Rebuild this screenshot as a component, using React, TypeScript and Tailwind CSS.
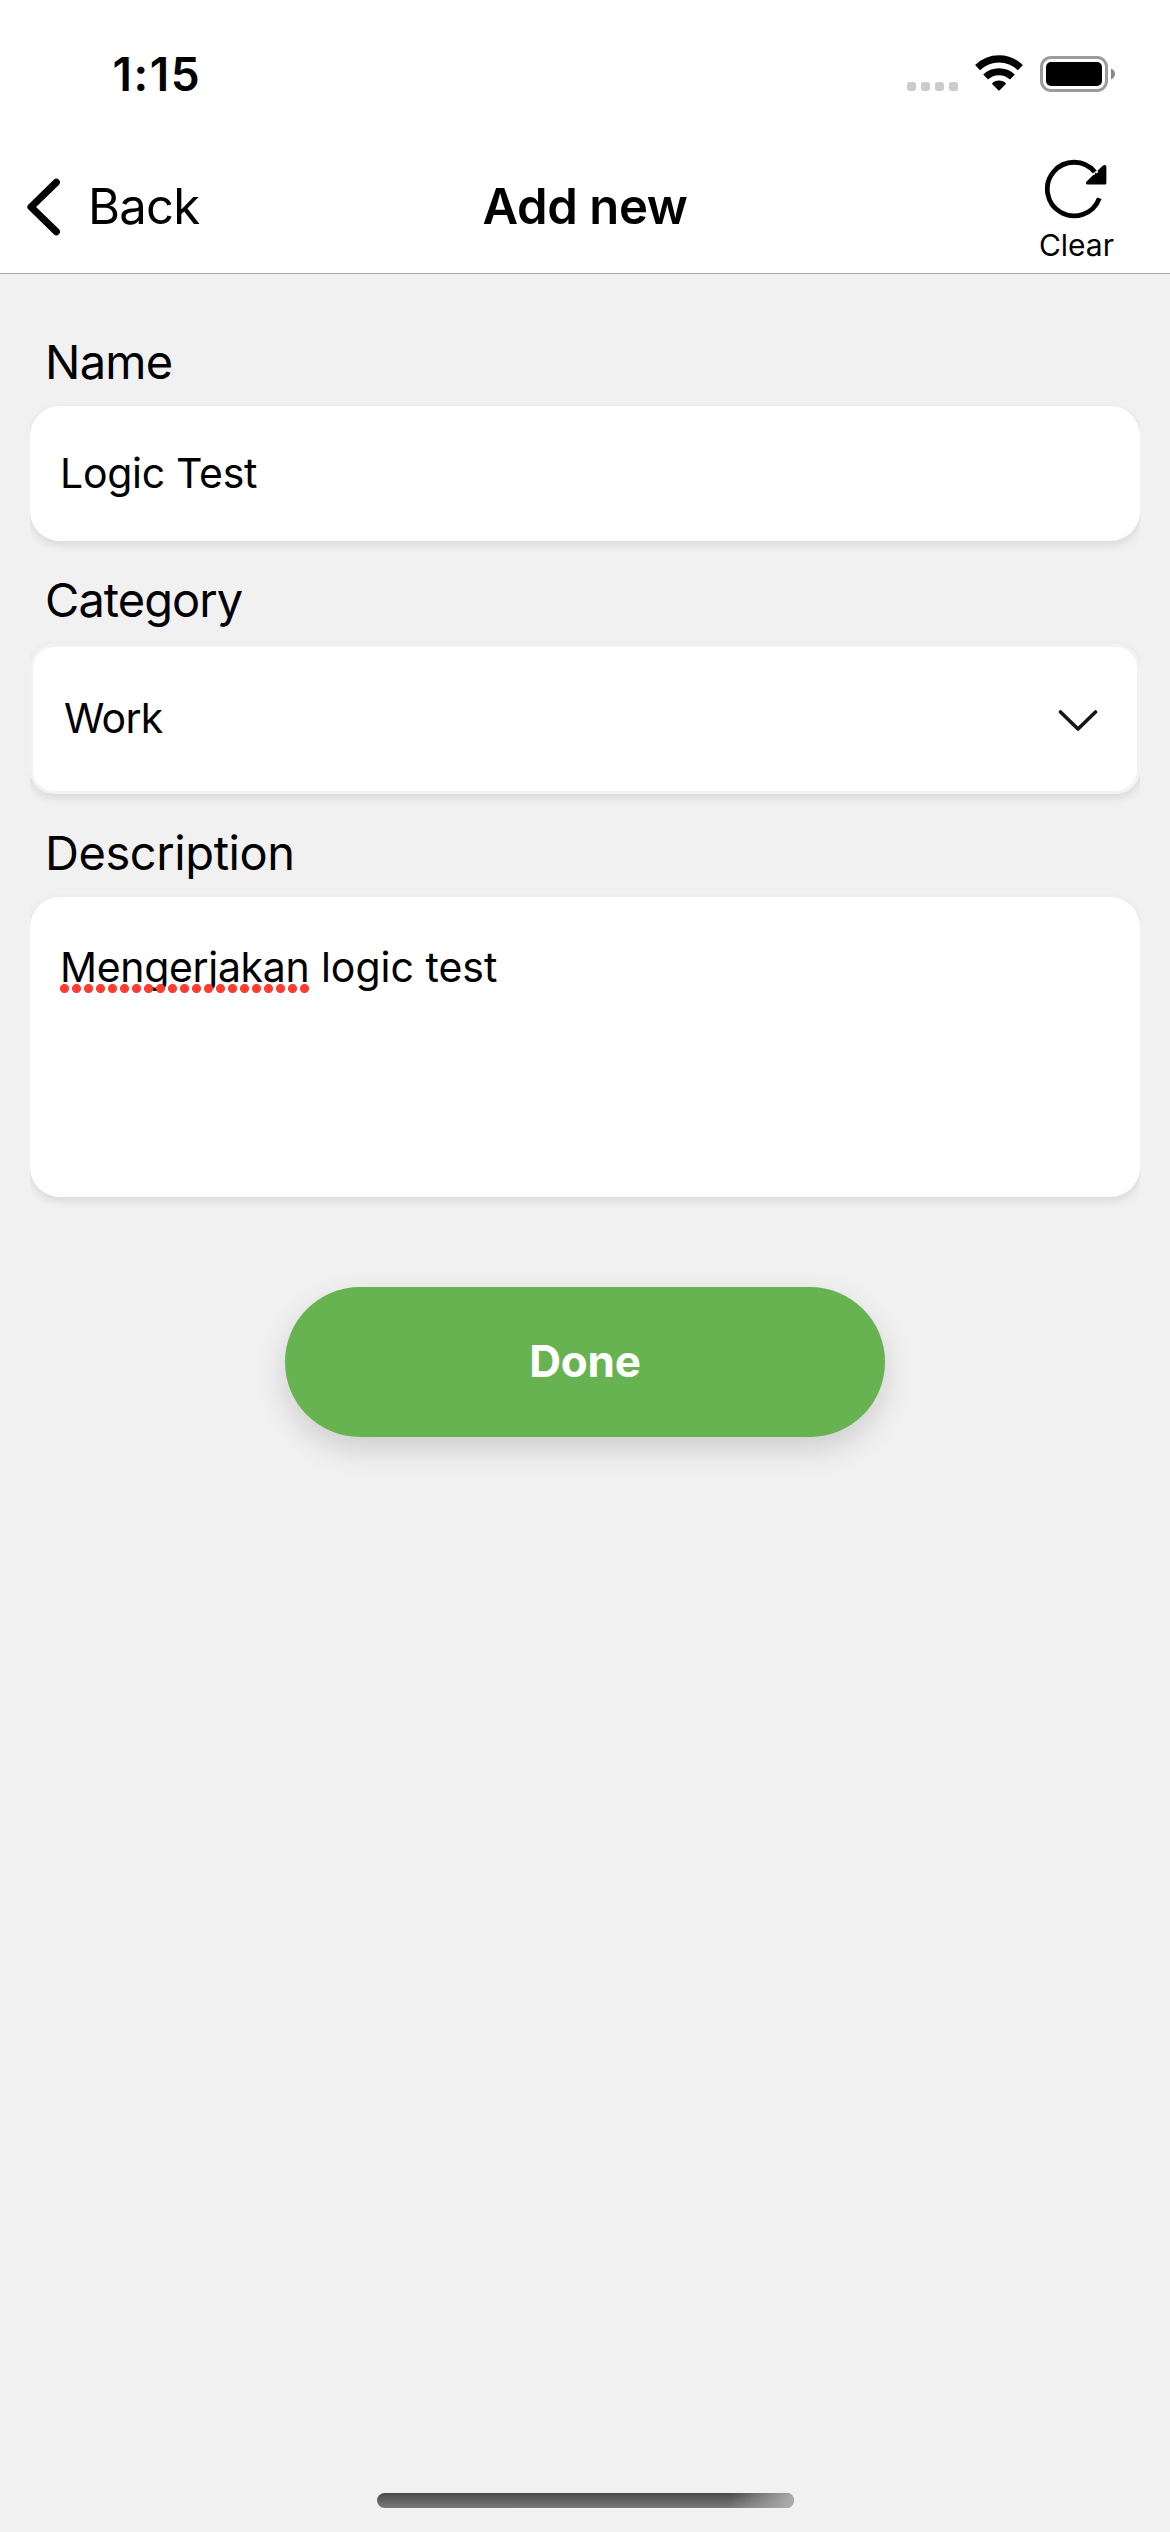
import React from 'react';

function SignalDots() {
  return (
    <div className="mb-[11px] flex gap-[5px] self-end">
      {[0, 1, 2, 3].map((i) => (
        <span key={i} className="size-[9px] rounded-[3px] bg-[#cbcbcb]" />
      ))}
    </div>
  );
}

function WifiIcon() {
  return (
    <svg width="50" height="38" viewBox="0 0 50 38" fill="none">
      <path d="M3.6 12.6C15.7 0.9 34.3 0.9 46.4 12.6" stroke="#000" strokeWidth="7.2" />
      <path d="M11.6 22C19 14.9 31 14.9 38.4 22" stroke="#000" strokeWidth="7" />
      <path
        d="M18.6 29.5C18 28.9 18 28.2 18.7 27.7C22.3 24.8 27.7 24.8 31.3 27.7C32 28.2 32 28.9 31.4 29.5L25.7 35.3C25.3 35.7 24.7 35.7 24.3 35.3Z"
        fill="#000"
      />
    </svg>
  );
}

function Battery() {
  return (
    <div className="flex items-center gap-[3px]">
      <div className="h-[36px] w-[68px] rounded-[11px] border-3 border-[#9b9b9b] p-[3px]">
        <div className="h-full rounded-[5px] bg-black" />
      </div>
      <svg width="4" height="12" viewBox="0 0 4 12">
        <path d="M0 0.5C2.6 1.6 4 3.6 4 6S2.6 10.4 0 11.5Z" fill="#8a8a8a" />
      </svg>
    </div>
  );
}

function StatusBar() {
  return (
    <div className="flex h-[141px] items-center justify-between pt-[7px] pr-[55px] pl-[112.5px]">
      <span className="text-[46px] leading-[56px] font-semibold tracking-[1.58px]">1:15</span>
      <div className="flex h-[56px] items-center">
        <SignalDots />
        <span className="ml-[16px]">
          <WifiIcon />
        </span>
        <span className="ml-[16px]">
          <Battery />
        </span>
      </div>
    </div>
  );
}

function ClearIcon() {
  return (
    <svg width="62" height="60" viewBox="0 0 62 60" fill="none">
      <path d="M54.3 39.2A26.8 26.8 0 1 1 49.8 13" stroke="#000" strokeWidth="4.8" />
      <path
        d="M41.6 22.6L57.7 6.8C59.3 5.3 61.4 6 61.4 8V23.4C61.4 25 60.6 25.6 59 25.6H42.5C40.7 25.6 40.4 23.8 41.6 22.6Z"
        fill="#000"
      />
      <path d="M48 14.4L49.8 15.4M52.8 12.4L51.2 14" stroke="#fff" strokeWidth="1.6" />
    </svg>
  );
}

function NavBar() {
  return (
    <nav className="grid h-[133px] grid-cols-[1fr_auto_1fr] items-center border-b border-[#a9a9a9]">
      <button className="flex items-center gap-[27px] pl-[26px] text-left">
        <svg width="35" height="58" viewBox="0 0 35 58" fill="none">
          <path
            d="M30.3 4.3L5 29L30.3 53.7"
            stroke="#000"
            strokeWidth="7.2"
            strokeLinecap="round"
            strokeLinejoin="round"
          />
        </svg>
        <span className="text-[49px] leading-[60px] tracking-[-0.76px]">Back</span>
      </button>
      <h1 className="text-[49px] leading-[60px] font-semibold tracking-[-0.4px]">Add new</h1>
      <button className="flex flex-col items-center gap-[6px] self-end justify-self-end pr-[56px] pb-[8px]">
        <ClearIcon />
        <span className="text-[30px] leading-[40px]">Clear</span>
      </button>
    </nav>
  );
}

const card = 'bg-white shadow-[0_4px_10px_rgba(0,0,0,0.1)]';

export default function App() {
  return (
    <div className="flex h-[2532px] w-[1170px] flex-col bg-[#f1f1f1] font-['Inter',sans-serif] text-black">
      <header className="bg-white">
        <StatusBar />
        <NavBar />
      </header>

      <main className="mx-[30px] flex-1 overflow-x-clip pt-[59px]">
        <div className="mb-[15px] pl-[15px] text-[47px] leading-[58px] tracking-[-0.76px]">Name</div>
        <div className={`${card} flex h-[135px] items-center rounded-[30px] pb-[2px] pl-[30px]`}>
          <span className="text-[41px] leading-[50px] tracking-[-0.29px]">Logic Test</span>
        </div>

        <div className="mt-[30px] mb-[15px] pl-[15px] text-[47px] leading-[58px] tracking-[-0.95px]">
          Category
        </div>
        <div
          className={`${card} flex h-[150px] items-center justify-between rounded-[24px] border-3 border-[#f2f2f2] pr-[39px] pl-[31px]`}
        >
          <span className="pb-[2px] text-[41px] leading-[50px] tracking-[-0.76px]">Work</span>
          <svg className="mt-[2px]" width="40" height="23" viewBox="0 0 40 23" fill="none">
            <path
              d="M2.5 3L20 20L37.5 3"
              stroke="#161618"
              strokeWidth="3.6"
              strokeLinecap="round"
              strokeLinejoin="round"
            />
          </svg>
        </div>

        <div className="mt-[30px] mb-[15px] pl-[15px] text-[47px] leading-[58px] tracking-[-0.42px]">
          Description
        </div>
        <div className={`${card} h-[300px] rounded-[30px] pt-[45px] pl-[30px]`}>
          <p className="text-[41px] leading-[50px]">
            <span className="relative inline-block tracking-[-0.33px]">
              Mengerjakan
              <span className="absolute top-[42px] left-0 h-[9px] w-[252px] bg-[radial-gradient(circle_at_4.5px_4.5px,#ff3b30_4.1px,transparent_4.9px)] bg-[length:12px_9px] bg-repeat-x" />
            </span>{' '}
            logic test
          </p>
        </div>

        <button className="mx-auto mt-[90px] flex h-[150px] w-[600px] items-center justify-center rounded-full bg-[#67b352] pb-[3px] text-[44px] leading-[54px] font-bold tracking-[-0.18px] text-white shadow-[0_12px_30px_rgba(0,0,0,0.15)]">
          Done
        </button>
      </main>

      <footer className="flex justify-center pb-[24px]">
        <div className="relative h-[15px] w-[417px] overflow-hidden rounded-full bg-linear-to-b from-[#4b4b4b] to-[#7a7a7a]">
          <div className="absolute inset-y-0 right-0 w-[70px] bg-[linear-gradient(105deg,transparent_10%,#b0b0b0)]" />
        </div>
      </footer>
    </div>
  );
}
